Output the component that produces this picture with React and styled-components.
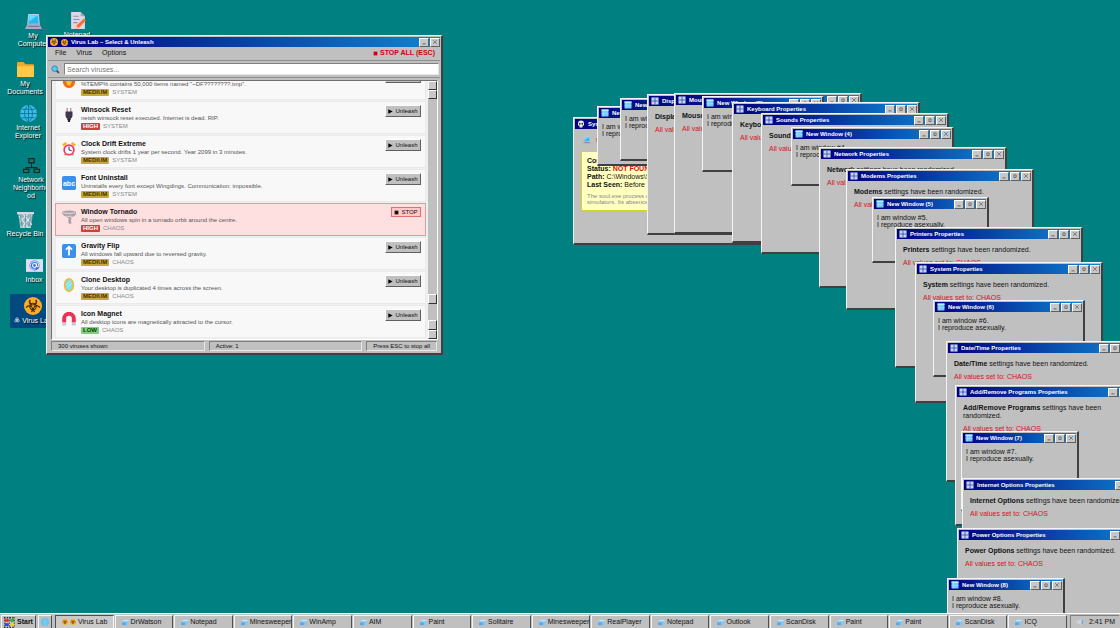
import React from 'react';
import styled, { createGlobalStyle, css } from 'styled-components';

const Global = createGlobalStyle`
  * { box-sizing: border-box; }
  html, body, #root { height: 100%; }
  body { margin: 0; overflow: hidden; background: #008080; }
  button, input { font: inherit; color: inherit; margin: 0; }
  p { margin: 0; }
`;

const raised = css`
  border: 1px solid;
  border-color: #ffffff #606060 #606060 #ffffff;
`;
const sunken = css`
  border: 1px solid;
  border-color: #808080 #e8e8e8 #e8e8e8 #808080;
`;

const Screen = styled.div`
  display: flex;
  flex-direction: column;
  height: 100vh;
  font: 7px/8px "Liberation Sans", Arial, sans-serif;
  color: #111;
`;
const Desktop = styled.main`
  position: relative;
  flex: 1;
  min-height: 0;
  overflow: hidden;
  background: #008080;
`;

/* Desktop shortcuts */
const Shortcut = styled.button`
  position: absolute;
  left: ${(p) => p.$x}px;
  top: ${(p) => p.$y}px;
  width: 46px;
  padding: 3px;
  display: flex;
  flex-direction: column;
  align-items: center;
  gap: 2px;
  border: 0;
  background: ${(p) => (p.$selected ? '#004a80' : 'transparent')};
  color: #fff;
  line-height: 8px;
  text-shadow: 1px 1px 1px #000;
`;
const ShortcutLabel = styled.span`
  width: 38px;
  overflow-wrap: anywhere;
  white-space: ${(p) => (p.$nowrap ? 'nowrap' : 'normal')};
  display: ${(p) => (p.$nowrap ? 'flex' : 'block')};
  justify-content: center;
`;

/* Windows */
const Frame = styled.section`
  position: absolute;
  left: ${(p) => p.$x}px;
  top: ${(p) => p.$y}px;
  width: ${(p) => p.$w}px;
  height: ${(p) => p.$h}px;
  display: flex;
  flex-direction: column;
  background: #c0c0c0;
  border: solid;
  border-width: 1px 2px 2px 1px;
  border-color: #f4f4f4 #404040 #404040 #f4f4f4;
  padding: 1px;
`;
const TitleBar = styled.header`
  display: flex;
  align-items: center;
  gap: 1px;
  flex: none;
  height: 10px;
  padding: 0 0 0 2px;
  background: linear-gradient(90deg, #000080, #1084d0);
  color: #fff;
  font-size: 6px;
  font-weight: bold;
  white-space: nowrap;
`;
const TitleText = styled.h2`
  flex: 1;
  display: flex;
  align-items: center;
  gap: 3px;
  margin: 0 0 0 2px;
  overflow: hidden;
  font: inherit;
`;
const TitleButton = styled.button`
  ${raised}
  width: 10px;
  height: 9px;
  padding: 0;
  display: grid;
  place-items: center;
  background: #c8c8c8;
  color: #222;
`;
const PropsBody = styled.div`
  padding: 7px 6px;
  display: flex;
  flex-direction: column;
  gap: 5px;
`;
const CloneBody = styled.div`
  padding: 5px 3px;
  line-height: 7px;
  white-space: nowrap;
`;
const Red = styled.p`
  color: #d8101c;
`;

/* Missing process window */
const SoulBody = styled.div`
  padding: 7px 6px;
  display: flex;
  flex-direction: column;
  gap: 7px;
`;
const SoulHead = styled.div`
  display: flex;
  align-items: center;
  gap: 5px;
  padding-left: 2px;
  color: #d8101c;
`;
const SoulNote = styled.div`
  padding: 5px;
  border: 1px solid #d8d030;
  background: #ffffc0;
  white-space: nowrap;
  overflow: hidden;
`;
const SoulSmall = styled.p`
  margin-top: 4px;
  color: #888;
  font-size: 6px;
  line-height: 6px;
`;

/* Virus Lab */
const MenuBar = styled.nav`
  display: flex;
  align-items: center;
  flex: none;
  height: 14px;
  padding: 0 5px 1px 7px;
  gap: 10px;
  border-bottom: 1px solid #909090;
`;
const MenuButton = styled.button`
  padding: 0;
  border: 0;
  background: none;
`;
const StopAll = styled.button`
  margin-left: auto;
  display: flex;
  align-items: center;
  gap: 2px;
  padding: 0;
  border: 0;
  background: none;
  color: #d00010;
  font-weight: bold;
`;
const SearchBar = styled.label`
  display: flex;
  align-items: center;
  flex: none;
  height: 17px;
  padding: 0 1px 0 3px;
  gap: 4px;
  border-bottom: 1px solid #909090;
`;
const SearchInput = styled.input`
  ${sunken}
  flex: 1;
  min-width: 0;
  height: 12px;
  padding: 0 2px;
  background: #fff;
  &::placeholder { color: #777; opacity: 1; }
`;
const ListPane = styled.div`
  display: flex;
  flex: 1;
  min-height: 0;
  margin: 2px 2px 0 3px;
  border: 1px solid;
  border-color: #707070 #fff #fff #707070;
  background: #efefef;
`;
const Rows = styled.ul`
  flex: 1;
  min-width: 0;
  margin: 0;
  padding: 0 2px 1px 3px;
  list-style: none;
  display: flex;
  flex-direction: column;
  justify-content: flex-end;
  gap: 1px;
  overflow: hidden;
`;
const Row = styled.li`
  flex: none;
  display: flex;
  align-items: flex-start;
  padding: 3px 4px 3px 6px;
  gap: 5px;
  border: 1px solid ${(p) => (p.$active ? '#e49a9a' : '#ebebeb')};
  background: ${(p) => (p.$active ? '#ffe0e0' : '#f8f8f8')};
  svg { margin-top: 3px; flex: none; }
`;
const RowText = styled.div`
  flex: 1;
  min-width: 0;
`;
const Name = styled.h3`
  margin: 0;
  font-size: 7px;
  line-height: 9px;
`;
const Description = styled.p`
  color: #555;
  font-size: 6px;
  line-height: 8px;
`;
const Tags = styled.div`
  display: flex;
  align-items: center;
  gap: 3px;
  margin-top: 1px;
  color: #888;
  font-size: 6px;
  line-height: 7px;
`;
const severity = {
  LOW: ['#84cc80', '#004800'],
  MEDIUM: ['#c8a838', '#443000'],
  HIGH: ['#cc4040', '#ffffff'],
};
const Badge = styled.span`
  padding: 0 2px;
  border-radius: 1px;
  background: ${(p) => severity[p.$level][0]};
  color: ${(p) => severity[p.$level][1]};
  font-weight: bold;
`;
const RunButton = styled.button`
  ${raised}
  width: 36px;
  height: 12px;
  padding: 0;
  display: flex;
  align-items: center;
  justify-content: center;
  gap: 2px;
  background: #c0c0c0;
  font-size: 6px;
  svg { margin: 0; }
  ${(p) => p.$stop && css`
    width: 30px;
    height: 10px;
    border-color: #e07070;
    background: #ffc8c8;
  `}
`;
const Scrollbar = styled.div`
  flex: none;
  width: 9px;
  display: flex;
  flex-direction: column;
  background: #c0c0c0;
`;
const ScrollPart = styled.span`
  ${raised}
  border-right-color: #333;
  border-bottom-color: #333;
  height: ${(p) => p.$h}px;
  background: #c8c8c8;
`;
const Track = styled.span`
  flex: ${(p) => p.$grow};
`;
const StatusBar = styled.footer`
  display: flex;
  flex: none;
  height: 12px;
  padding: 1px 3px 1px 3px;
  gap: 4px;
  font-size: 6px;
`;
const StatusCell = styled.span`
  ${sunken}
  flex: ${(p) => (p.$fit ? 'none' : '1')};
  padding: 0 6px;
`;

/* Taskbar */
const Taskbar = styled.footer`
  display: flex;
  flex: none;
  height: 15px;
  padding: 1px 1px 0;
  gap: 2px;
  border-top: 1px solid #fff;
  background: #c0c0c0;
`;
const BarButton = styled.button`
  flex: ${(p) => (p.$fit ? 'none' : '1 1 0')};
  min-width: 0;
  padding: ${(p) => (p.$fit ? '0 2px' : '0 0 0 6px')};
  display: flex;
  align-items: center;
  gap: 2px;
  border: solid;
  border-width: 1px 1px 0 1px;
  border-color: ${(p) => (p.$pressed ? '#505050 #f4f4f4 #fff #505050' : '#f4f4f4 #505050 #505050 #f4f4f4')};
  background: ${(p) => (p.$pressed ? '#cacaca' : '#c0c0c0')};
  font-weight: ${(p) => (p.$bold ? 'bold' : 'normal')};
  white-space: nowrap;
`;
const Tasks = styled.div`
  flex: 1;
  min-width: 0;
  display: flex;
  gap: 1px;
  margin-left: 1px;
`;
const Tray = styled.div`
  flex: none;
  width: 49px;
  margin-left: 1px;
  padding: 0 4px;
  display: flex;
  align-items: center;
  justify-content: flex-end;
  gap: 5px;
  border: solid #808080;
  border-width: 1px 0 0 1px;
`;

const Svg = styled.svg`
  flex: none;
`;

const shapes = {
  computer: <><path d="M3 1h10l1 10H2z" fill="#b8cede" /><path d="M4 2h8l1 8H3z" fill="#28b8f4" /><path d="M4 2h8L4 8z" fill="#68dcff" /><path d="M2 11h12l2 4H0z" fill="#b0a8c8" /><path d="M3 12h10l1 1H3z" fill="#706888" /></>,
  note: <><path d="M2 0h9l4 4v12H2z" fill="#ded8e6" /><path d="M11 0v4h4z" fill="#a8a0b8" /><path d="M4 4h5M4 7h6M4 10h4" stroke="#9890a8" /><path d="M14 6l2 2-7 7-3 1 1-3z" fill="#f47030" /><path d="M7 13l2 2-3 1z" fill="#ffd080" /></>,
  folder: <><path d="M0 2q0-1 1-1h5l2 2h7q1 0 1 1v10q0 1-1 1H1q-1 0-1-1z" fill="#f0a828" /><path d="M0 5h16v9q0 1-1 1H1q-1 0-1-1z" fill="#ffc848" /></>,
  globe: <><circle cx="8" cy="8" r="8" fill="#38bcec" /><path d="M0 8h16M8 0v16M2 4h12M2 12h12M8 0C3 4 3 12 8 16M8 0c5 4 5 12 0 16" fill="none" stroke="#0c7088" strokeWidth=".8" /></>,
  globeLight: <><circle cx="8" cy="8" r="8" fill="#58bcec" /><path d="M0 8h16M8 0v16M2 4h12M2 12h12" fill="none" stroke="#a8dcf0" /></>,
  network: <><path d="M8 6v4M3 12v-2h10v2" fill="none" stroke="#182828" /><path d="M5 1h6v5H5zM0 11h6v4H0zM10 11h6v4h-6z" fill="#102424" /><path d="M6 2h4v3H6zM1 12h4v2H1zM11 12h4v2h-4z" fill="#287060" /></>,
  bin: <><path d="M1 2h14l-2 14H3z" fill="#90b4bc" /><path d="M2 5l9 11M6 3l8 10M14 4L5 15M10 3L3 10M3 15h10" stroke="#e0eaee" /><path d="M3 4l2 11M13 4l-2 11M8 3v13" stroke="#5c8890" strokeWidth=".6" /><path d="M0 1h16v2H0z" fill="#d4e0e4" /></>,
  mail: <><path d="M0 2h16v12H0z" fill="#e4dcf0" /><circle cx="8" cy="8" r="4.8" fill="#3870e0" /><circle cx="8" cy="8" r="1.8" fill="none" stroke="#fff" /><path d="M10 6v3q2 1 2-1c0-5-8-5-8 0 0 4 4 4 5 3" fill="none" stroke="#fff" strokeWidth=".8" /></>,
  bio: <><circle cx="8" cy="8" r="8" fill="#ffac24" /><g fill="none" stroke="#503010" strokeWidth="1.300"><path d="M5.500 2.500A3 3 0 1 0 10.500 2.500" /><path d="M2 9.500A3 3 0 1 1 6.500 13.200" /><path d="M14 9.500A3 3 0 1 0 9.500 13.200" /></g><circle cx="8" cy="8.400" r="2.800" fill="none" stroke="#503010" /><circle cx="8" cy="8.400" r="1" fill="#ffac24" /></>,
  biomark: <><g fill="none" stroke="#fff" strokeWidth="1.6"><circle cx="8" cy="5" r="3" /><circle cx="5" cy="10" r="3" /><circle cx="11" cy="10" r="3" /></g></>,
  fire: <><path d="M1 2h14v8q-2 6-7 6T1 10z" fill="#e87018" /><path d="M5 2h6v7q-1 4-3 4T5 9z" fill="#ffc030" /></>,
  plug: <><path d="M6 0v5M10 0v5" stroke="#b89890" strokeWidth="1.600" /><path d="M4 4h8v5q-1 3-2 3v2H6v-2q-1 0-2-3z" fill="#40384c" /><path d="M8 12v4" stroke="#282430" strokeWidth="2.4" /></>,
  clock: <><path d="M1 4l4-3M15 4l-4-3" stroke="#ffb430" strokeWidth="3" /><path d="M3 15l2-2M13 15l-2-2" stroke="#e89028" strokeWidth="2" /><circle cx="8" cy="9" r="5.500" fill="#fff" stroke="#f03868" strokeWidth="2" /><path d="M8 5v4l3 1" fill="none" stroke="#403060" strokeWidth="1.2" /></>,
  abc: <><rect width="16" height="16" rx="2" fill="#3c90ec" /><text x="8" y="11" textAnchor="middle" fontSize="8" fontWeight="bold" fill="#fff">abc</text></>,
  tornado: <><path d="M0 2q8-3 16 0v3q-2 3-6 3l1 2-1 2 1 3-3 1-1-4 1-2-3-2Q0 6 0 2z" fill="#aaa0a8" /><path d="M1 3q7 2 14 0M4 7q3 1 7 0" fill="none" stroke="#dcd0d6" strokeWidth="1.5" /></>,
  up: <><rect width="16" height="16" rx="2" fill="#3c90ec" /><path d="M8 3v10M4.5 6.5L8 3l3.500 3.500" fill="none" stroke="#fff" strokeWidth="2" /></>,
  mirror: <><ellipse cx="8" cy="8" rx="6" ry="8" fill="#f4b840" /><ellipse cx="8" cy="8" rx="4" ry="6" fill="#80e0e8" /><path d="M5 8l5-5M6 11l5-5" stroke="#c8f8f8" /></>,
  magnet: <><path d="M2.500 12V7.500a5.500 5.500 0 0 1 11 0V12" fill="none" stroke="#ec3058" strokeWidth="4.500" /><path d="M.3 12h4.500v3.500H.3zM11.200 12h4.500v3.500h-4.500z" fill="#c8c4d0" /></>,
  search: <><path d="M9 9l5 5" stroke="#503868" strokeWidth="3" /><circle cx="6.500" cy="6.500" r="5" fill="#58c8f0" stroke="#3080b0" strokeWidth="1.500" /></>,
  grid: <><path d="M1 1h14v14H1z" fill="#d8e4ff" /><path d="M8 1v14M1 8h14" stroke="#3858b0" strokeWidth="2" /><path d="M4 2v12M12 2v12" stroke="#90a8e0" /></>,
  pane: <><path d="M1 1h14v14H1z" fill="#78ccfc" /><path d="M1 1h14v3H1z" fill="#b8ecff" /><path d="M5 4v11M1 9h14" stroke="#a8e0ff" /></>,
  skull: <><path d="M2 7a6 6 0 0 1 12 0v4h-3v4H5v-4H2z" fill="#eee" /><circle cx="5.500" cy="7.500" r="1.800" fill="#333" /><circle cx="10.500" cy="7.500" r="1.800" fill="#333" /></>,
  play: <path d="M1 1l14 7-14 7z" fill="#000" />,
  stop: <path d="M2 2h12v12H2z" fill="currentColor" />,
  min: <path d="M4 13h8" stroke="#444" strokeWidth="2" />,
  max: <path d="M5 5h6v7H5z" fill="none" stroke="#555" strokeWidth="2" />,
  close: <path d="M3 3l10 10M13 3L3 13" stroke="#666" strokeWidth="2" />,
  flag: <><path d="M0 1h16M0 15h16" stroke="#222" strokeWidth="2" strokeDasharray="2 2" /><path d="M1 3h6v4H1z" fill="#e03030" /><path d="M9 3h6v4H9z" fill="#30b040" /><path d="M1 9h6v4H1z" fill="#2848d8" /><path d="M9 9h6v4H9z" fill="#f0d020" /><path d="M8 0v16M1 0v16M15 0v16" stroke="#222" strokeDasharray="2 2" /></>,
  app: <><path d="M3 2h12v12H3z" fill="#80c8f4" /><path d="M3 2h12v3H3z" fill="#c4e8fa" /><path d="M0 8h9v6H0z" fill="#58a8f0" /></>,
  speaker: <><path d="M1 5h4l5-4v14l-5-4H1z" fill="#ccd0e0" /><path d="M12 4q3 4 0 8" fill="none" stroke="#50a8f4" strokeWidth="2" /></>,
};
const Icon = ({ name, s = 16 }) => (
  <Svg width={s} height={s} viewBox="0 0 16 16" aria-hidden="true">{shapes[name]}</Svg>
);

function Win({ x, y, w, h, title, icon, noMax, children }) {
  return (
    <Frame $x={x} $y={y} $w={w} $h={h}>
      <TitleBar>
        <Icon name={icon} s={8} />
        <TitleText>{title}</TitleText>
        <TitleButton aria-label="Minimize"><Icon name="min" s={6} /></TitleButton>
        {!noMax && <TitleButton aria-label="Maximize"><Icon name="max" s={6} /></TitleButton>}
        <TitleButton aria-label="Close"><Icon name="close" s={6} /></TitleButton>
      </TitleBar>
      {children}
    </Frame>
  );
}

const PropsWin = ({ x, y, of }) => (
  <Win x={x} y={y} w={188} h={141} icon="grid" title={`${of} Properties`}>
    <PropsBody>
      <p><b>{of}</b> settings have been randomized.</p>
      <Red>All values set to: CHAOS</Red>
    </PropsBody>
  </Win>
);
const CloneWin = ({ x, y, n, w = 117, h = 66 }) => (
  <Win x={x} y={y} w={w} h={h} icon="pane" title={`New Window (${n})`}>
    <CloneBody>
      <p>I am window #{n}.</p>
      <p>I reproduce asexually.</p>
    </CloneBody>
  </Win>
);

const viruses = [
  ['fire', 'Temp Flood', '%TEMP% contains 50,000 items named "~DF????????.tmp".', 'MEDIUM', 'SYSTEM'],
  ['plug', 'Winsock Reset', 'netsh winsock reset executed. Internet is dead. RIP.', 'HIGH', 'SYSTEM'],
  ['clock', 'Clock Drift Extreme', 'System clock drifts 1 year per second. Year 2099 in 3 minutes.', 'MEDIUM', 'SYSTEM'],
  ['abc', 'Font Uninstall', 'Uninstalls every font except Wingdings. Communication: impossible.', 'MEDIUM', 'SYSTEM'],
  ['tornado', 'Window Tornado', 'All open windows spin in a tornado orbit around the centre.', 'HIGH', 'CHAOS', true],
  ['up', 'Gravity Flip', 'All windows fall upward due to reversed gravity.', 'MEDIUM', 'CHAOS'],
  ['mirror', 'Clone Desktop', 'Your desktop is duplicated 4 times across the screen.', 'MEDIUM', 'CHAOS'],
  ['magnet', 'Icon Magnet', 'All desktop icons are magnetically attracted to the cursor.', 'LOW', 'CHAOS'],
];

const shortcuts = [
  ['computer', 'My Computer', 10, 10],
  ['note', 'Notepad', 54, 9],
  ['folder', 'My Documents', 2, 58],
  ['globe', 'Internet Explorer', 5, 102],
  ['network', 'Network Neighborhood', 8, 154],
  ['bin', 'Recycle Bin', 2, 208],
  ['mail', 'Inbox', 11, 254],
];

const tasks = ['DrWatson', 'Notepad', 'Minesweeper', 'WinAmp', 'AIM', 'Paint', 'Solitaire', 'Minesweeper',
  'RealPlayer', 'Notepad', 'Outlook', 'ScanDisk', 'Paint', 'Paint', 'ScanDisk', 'ICQ'];

function VirusLab() {
  return (
    <Win x={46} y={35} w={397} h={320} icon="bio" noMax
      title={<><Icon name="bio" s={7} />Virus Lab – Select &amp; Unleash</>}>
      <MenuBar>
        <MenuButton>File</MenuButton>
        <MenuButton>Virus</MenuButton>
        <MenuButton>Options</MenuButton>
        <StopAll><Icon name="stop" s={5} />STOP ALL (ESC)</StopAll>
      </MenuBar>
      <SearchBar>
        <Icon name="search" s={9} />
        <SearchInput type="text" placeholder="Search viruses..." aria-label="Search viruses" />
      </SearchBar>
      <ListPane>
        <Rows>
          {viruses.map(([icon, name, text, level, group, active]) => (
            <Row key={name} $active={active}>
              <Icon name={icon} s={14} />
              <RowText>
                <Name>{name}</Name>
                <Description>{text}</Description>
                <Tags><Badge $level={level}>{level}</Badge>{group}</Tags>
              </RowText>
              <RunButton $stop={active}>
                <Icon name={active ? 'stop' : 'play'} s={5} />{active ? 'STOP' : 'Unleash'}
              </RunButton>
            </Row>
          ))}
        </Rows>
        <Scrollbar>
          <ScrollPart $h={9} />
          <ScrollPart $h={9} />
          <Track $grow={12} />
          <ScrollPart $h={10} />
          <Track $grow={1} />
          <ScrollPart $h={10} />
          <ScrollPart $h={9} />
        </Scrollbar>
      </ListPane>
      <StatusBar>
        <StatusCell>300 viruses shown</StatusCell>
        <StatusCell>Active: 1</StatusCell>
        <StatusCell $fit>Press ESC to stop all</StatusCell>
      </StatusBar>
    </Win>
  );
}

export default function App() {
  return (
    <Screen>
      <Global />
      <Desktop>
        {shortcuts.map(([icon, label, x, y]) => (
          <Shortcut key={label} $x={x} $y={y}>
            <Icon name={icon} s={17} />
            <ShortcutLabel>{label}</ShortcutLabel>
          </Shortcut>
        ))}
        <Shortcut $x={10} $y={294} $selected>
          <Icon name="bio" s={18} />
          <ShortcutLabel $nowrap><Icon name="biomark" s={6} />&nbsp;Virus Lab</ShortcutLabel>
        </Shortcut>

        <Win x={573} y={117} w={200} h={128} icon="skull" title="System Soul">
          <SoulBody>
            <SoulHead><Icon name="computer" s={8} /><b>soul.exe</b></SoulHead>
            <SoulNote>
              <p><b>Component:</b> soul.exe</p>
              <p><b>Status: <Red as="span">NOT FOUND</Red></b></p>
              <p><b>Path:</b> C:\Windows\Soul</p>
              <p><b>Last Seen:</b> Before you</p>
              <SoulSmall>The soul.exe process could not be found in<br />simulators. Its absence is noted.</SoulSmall>
            </SoulNote>
          </SoulBody>
        </Win>
        <CloneWin x={597} y={106} n={1} h={60} />
        <CloneWin x={620} y={98} n={2} h={63} />
        <PropsWin x={647} y={94} of="Display" />
        <PropsWin x={674} y={93} of="Mouse" />
        <CloneWin x={702} y={96} n={3} w={122} h={76} />
        <PropsWin x={732} y={102} of="Keyboard" />
        <PropsWin x={761} y={113} of="Sounds" />
        <CloneWin x={791} y={127} n={4} w={163} h={59} />
        <PropsWin x={819} y={147} of="Network" />
        <PropsWin x={846} y={169} of="Modems" />
        <CloneWin x={872} y={197} n={5} />
        <PropsWin x={895} y={227} of="Printers" />
        <PropsWin x={915} y={262} of="System" />
        <CloneWin x={933} y={300} n={6} w={152} h={77} />
        <PropsWin x={946} y={341} of="Date/Time" />
        <PropsWin x={955} y={385} of="Add/Remove Programs" />
        <CloneWin x={961} y={431} n={7} w={118} h={80} />
        <PropsWin x={962} y={478} of="Internet Options" />
        <PropsWin x={957} y={528} of="Power Options" />
        <CloneWin x={947} y={578} n={8} w={118} h={77} />

        <VirusLab />
      </Desktop>
      <Taskbar>
        <BarButton $fit $bold><Icon name="flag" s={11} />Start</BarButton>
        <BarButton $fit aria-label="Internet Explorer"><Icon name="globeLight" s={8} /></BarButton>
        <Tasks>
          <BarButton $pressed><Icon name="bio" s={6} /><Icon name="bio" s={6} />Virus Lab</BarButton>
          {tasks.map((t, i) => (
            <BarButton key={i}><Icon name="app" s={7} />{t}</BarButton>
          ))}
        </Tasks>
        <Tray><Icon name="speaker" s={8} />2:41 PM</Tray>
      </Taskbar>
    </Screen>
  );
}
